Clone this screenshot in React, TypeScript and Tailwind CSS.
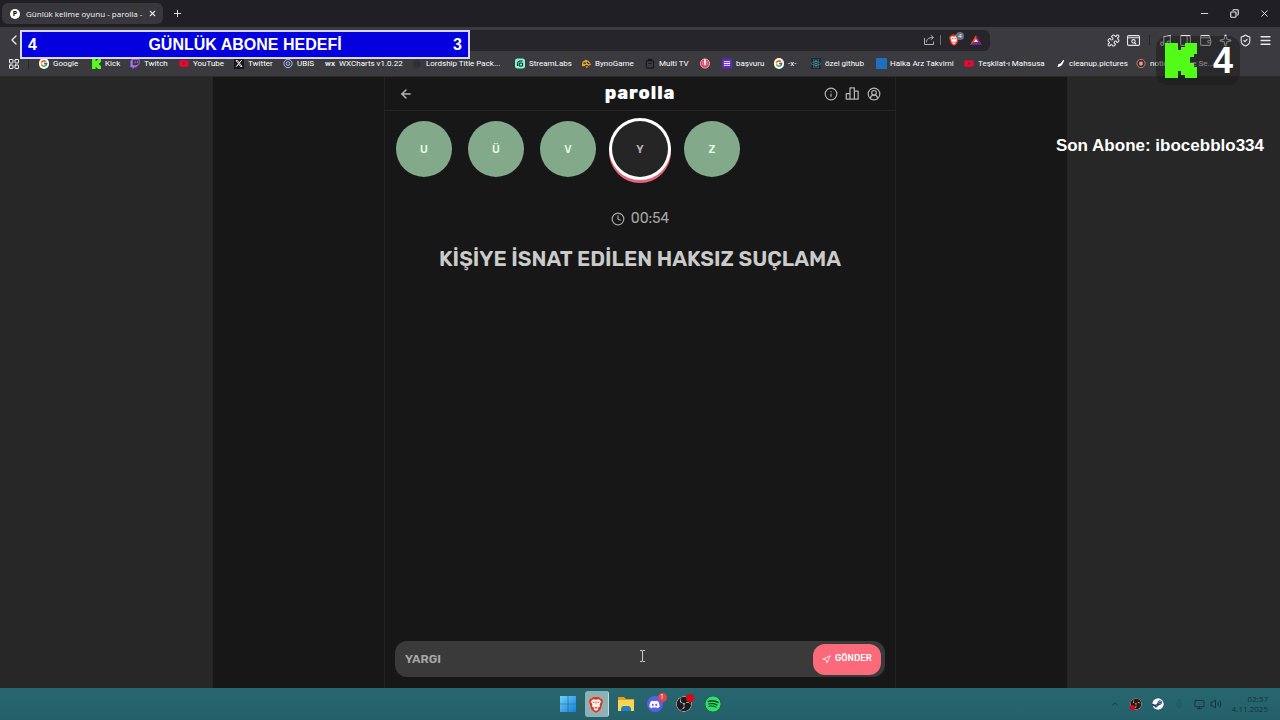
import type { ReactNode } from "react";
import {
    ArrowLeft,
    ChevronLeft,
    ChevronUp,
    CircleUserRound,
    Clock,
    Copy,
    Info,
    LayoutGrid,
    Menu,
    Mic,
    Minus,
    Monitor,
    Music,
    Navigation,
    PanelRight,
    Plus,
    Puzzle,
    ShieldCheck,
    Sparkle,
    Volume2,
    Wallet,
    X,
} from "lucide-react";
import { FaDiscord, FaReact, FaSpotify, FaSteam, FaTwitch, FaYoutube } from "react-icons/fa";
import { FaXTwitter } from "react-icons/fa6";
import { FcGoogle } from "react-icons/fc";
import { SiObsstudio } from "react-icons/si";

function KickLogo({ className }: { className?: string }) {
    return (
        <svg viewBox="0 0 32 35" className={className} fill="#53fc18" aria-hidden="true">
            <path d="M0 0h13v7h3V4h4V0h12v11h-3v3h-4v6h4v4h3v11H20v-3h-4v-4h-3v7H0z" />
        </svg>
    );
}

function BraveLogo({ className }: { className?: string }) {
    return (
        <svg viewBox="0 0 24 28" className={className} aria-hidden="true">
            <path d="M7 1h10l3 3h2l2 5-1 3-3 10-4 4-4 2-4-2-4-4L1 12 0 9l2-5h2z" fill="#e5331b" />
            <path d="M7 5l5 1 5-1 4 4-3 5 1 3-4 3 1 2-4 3-4-3 1-2-4-3 1-3-3-5z" fill="#fff" />
            <path d="M6 9l4 1-2 2zM18 9l-4 1 2 2zM11 9h2l-1 7zM8 17l4 2 4-2-4 5z" fill="#e5331b" />
        </svg>
    );
}

function TriangleLogo() {
    return (
        <svg viewBox="0 0 12 10" className="h-[10px] w-3" aria-hidden="true">
            <path d="M6 0L0 10l6-3z" fill="#ff4724" />
            <path d="M6 0l6 10-6-3z" fill="#9e1f63" />
            <path d="M0 10h12L6 6z" fill="#662d91" />
            <path d="M6 4L4 7h4z" fill="#fff" />
        </svg>
    );
}

function ShareIcon() {
    return (
        <svg
            viewBox="0 0 12 12"
            className="size-3"
            fill="none"
            stroke="#b4b4b8"
            strokeLinecap="round"
            strokeLinejoin="round"
            aria-hidden="true"
        >
            <path d="M1.5 4.5v6h9V8" />
            <path d="M3.5 8c0-3 2-4.5 6.5-4.5M8 1.5l2.5 2L8 5.5" />
        </svg>
    );
}

function PodiumIcon() {
    return (
        <svg
            viewBox="0 0 24 24"
            className="size-[15px]"
            fill="none"
            stroke="currentColor"
            strokeWidth="2"
            strokeLinejoin="round"
            aria-hidden="true"
        >
            <path d="M2 21V12h6v9zM8 21V3h7v18zM15 21V8h6v13z" />
        </svg>
    );
}

function WindowsLogo() {
    return (
        <svg viewBox="0 0 16 16" className="size-4" aria-hidden="true">
            <defs>
                <linearGradient id="win" x1="0" y1="0" x2="1" y2="1">
                    <stop offset="0" stopColor="#6fd0fa" />
                    <stop offset="1" stopColor="#1580d8" />
                </linearGradient>
            </defs>
            <path d="M0 0h7.7v7.7H0zM8.3 0H16v7.7H8.3zM0 8.3h7.7V16H0zM8.3 8.3H16V16H8.3z" fill="url(#win)" />
        </svg>
    );
}

function FolderLogo() {
    return (
        <svg viewBox="0 0 18 16" className="h-4 w-[18px]" aria-hidden="true">
            <path d="M1 1h6l2 2h8v5H1z" fill="#e0a21c" />
            <path d="M1 4h16v11H1z" fill="#fcd450" />
            <path d="M4 15v-3l2-2h6l2 2v3z" fill="#2380c4" />
        </svg>
    );
}

type Bookmark = { label: string; width: string; icon: ReactNode };

const bookmarks: Bookmark[] = [
    {
        label: "Google",
        width: "w-[52px]",
        icon: <FcGoogle className="size-[11px] rounded-full bg-white p-px" />,
    },
    { label: "Kick", width: "w-[39px]", icon: <KickLogo className="h-[10px] w-[9px]" /> },
    { label: "Twitch", width: "w-[49px]", icon: <FaTwitch className="size-[10px] text-[#a970ff]" /> },
    { label: "YouTube", width: "w-[55px]", icon: <FaYoutube className="size-[11px] text-[#f00433]" /> },
    {
        label: "Twitter",
        width: "w-[49px]",
        icon: <FaXTwitter className="size-[11px] bg-[#18181a] p-px text-white" />,
    },
    {
        label: "UBIS",
        width: "w-[42px]",
        icon: (
            <svg viewBox="0 0 12 12" className="size-[11px]" fill="#39405f" stroke="#c8cce0" aria-hidden="true">
                <circle cx="6" cy="6" r="5" />
                <circle cx="6" cy="6" r="2.2" />
            </svg>
        ),
    },
    {
        label: "WXCharts v1.0.22",
        width: "w-[87px]",
        icon: <span className="text-[8px] font-bold text-gray-200">wx</span>,
    },
    {
        label: "Lordship Title Pack...",
        width: "w-[103px]",
        icon: <span className="size-2 rounded-full bg-[#303034]" />,
    },
    {
        label: "StreamLabs",
        width: "w-[66px]",
        icon: (
            <svg viewBox="0 0 12 12" className="size-[11px]" aria-hidden="true">
                <rect width="12" height="12" rx="3" fill="#80f5d2" />
                <path d="M3 9V6q0-3 3-3h3M5 5.5h4V9H5z" fill="none" stroke="#09161d" strokeWidth="1.2" />
            </svg>
        ),
    },
    {
        label: "BynoGame",
        width: "w-[64px]",
        icon: (
            <svg viewBox="0 0 12 12" className="size-[10px]" aria-hidden="true">
                <path d="M1 7l1-4 4-2 4 2 2 4-3 1-2 3-2-3-3 1z" fill="#e9a527" />
                <path d="M3 5h3M7 4l3 2M5 8h3" stroke="#33291c" strokeWidth="1.4" />
            </svg>
        ),
    },
    {
        label: "Multi TV",
        width: "w-[55px]",
        icon: (
            <svg
                viewBox="0 0 12 12"
                className="size-[11px]"
                fill="none"
                stroke="#18181b"
                strokeWidth="1.4"
                aria-hidden="true"
            >
                <rect x="1.5" y="2.5" width="9" height="9" rx="2" />
                <path d="M4 2V1h4v1M4 6h4" />
            </svg>
        ),
    },
    {
        label: "",
        width: "w-[22px]",
        icon: (
            <svg viewBox="0 0 12 12" className="size-[11px]" aria-hidden="true">
                <circle cx="6" cy="6" r="5.5" fill="#e3415d" stroke="#f3c3cb" />
                <path d="M5 1h2v7H5z" fill="#fff" />
                <path d="M3.500 3v5M8.500 3v5" stroke="#f3c3cb" strokeWidth="0.6" />
            </svg>
        ),
    },
    {
        label: "başvuru",
        width: "w-[52px]",
        icon: (
            <svg viewBox="0 0 11 11" className="size-[11px]" aria-hidden="true">
                <rect width="11" height="11" fill="#5b2bbc" />
                <path d="M2 3.5h7M2 5.5h7M2 7.5h7" stroke="#fff" />
            </svg>
        ),
    },
    {
        label: "-x-",
        width: "w-[37px]",
        icon: <FcGoogle className="size-[11px] rounded-full bg-white p-px" />,
    },
    {
        label: "özel github",
        width: "w-[65px]",
        icon: <FaReact className="size-[11px] bg-[#1b2c30] text-[#4d9a9e]" />,
    },
    { label: "Halka Arz Takvimi", width: "w-[88px]", icon: <span className="size-[11px] shrink-0 bg-[#1f6fc0]" /> },
    {
        label: "Teşkilat-ı Mahsusa",
        width: "w-[91px]",
        icon: <FaYoutube className="size-[11px] text-[#f00433]" />,
    },
    {
        label: "cleanup.pictures",
        width: "w-[81px]",
        icon: (
            <svg viewBox="0 0 12 12" className="size-[9px]" aria-hidden="true">
                <path d="M2 11l1-4 3-1 4-5 1 1-3 6-3 2z" fill="#fff" />
            </svg>
        ),
    },
    {
        label: "notion Active Se...",
        width: "w-[90px]",
        icon: (
            <svg viewBox="0 0 12 12" className="size-[11px]" aria-hidden="true">
                <circle cx="6" cy="6" r="5" fill="#402c2c" stroke="#d48c80" />
                <path d="M4 4h4v3L6 9 4 7z" fill="#f2a093" />
            </svg>
        ),
    },
];

function TabStrip() {
    return (
        <div className="flex h-[27px] items-center bg-[#1f1f25] pl-[2px] text-gray-200">
            <div className="flex h-[21px] w-[161px] items-center rounded-md bg-[#38383c] pl-2 pr-[6px]">
                <span className="flex size-[10px] items-center justify-center rounded-full bg-white text-[7px] font-bold leading-none text-black">
                    P
                </span>
                <span className="ml-[6px] flex-1 truncate text-[8px] text-gray-100">
                    Günlük kelime oyunu - parolla -
                </span>
                <button type="button" aria-label="Close tab">
                    <X className="size-[9px]" strokeWidth={3} />
                </button>
            </div>
            <button type="button" aria-label="New tab" className="ml-[9px]">
                <Plus className="size-[11px]" />
            </button>
            <div className="ml-auto flex items-center gap-5 pr-[10px]">
                <button type="button" aria-label="Minimize">
                    <Minus className="size-[11px]" />
                </button>
                <button type="button" aria-label="Restore">
                    <Copy className="size-[9px] -scale-x-100" strokeWidth={3} />
                </button>
                <button type="button" aria-label="Close window">
                    <X className="size-[11px]" />
                </button>
            </div>
        </div>
    );
}

function Toolbar() {
    return (
        <div className="flex h-[26px] items-center bg-[#3b3b3f] pr-2 text-gray-200">
            <button type="button" aria-label="Back" className="pl-[6px]">
                <ChevronLeft className="size-4" />
            </button>
            <div className="ml-[8px] flex h-[21px] flex-1 items-center justify-end gap-[5px] rounded-md bg-[#26262a] pr-2">
                <ShareIcon />
                <span className="h-[10px] w-px bg-gray-500" />
                <span className="relative ml-[3px] mr-[6px]">
                    <BraveLogo className="h-3 w-[10px]" />
                    <span className="absolute -right-[5px] -top-[2px] flex size-2 items-center justify-center rounded-full bg-[#6b6f82] text-[6px] text-white">
                        4
                    </span>
                </span>
                <TriangleLogo />
            </div>
            <div className="ml-[117px] flex items-center gap-[7px]">
                <Puzzle className="size-[13px]" />
                <svg viewBox="0 0 12 12" className="size-[13px]" fill="none" stroke="currentColor" aria-hidden="true">
                    <rect x="0.5" y="1.5" width="11" height="9" rx="1" />
                    <path d="M1 3.5h10M7 8l1.5 1.5" />
                    <circle cx="6" cy="6.8" r="1.6" />
                </svg>
                <span className="mx-[2px] h-[10px] w-px bg-[#25252a]" />
                <Music className="size-[13px]" />
                <PanelRight className="size-[13px]" />
                <Wallet className="size-[13px]" />
                <Sparkle className="size-[13px]" />
                <ShieldCheck className="size-[13px]" />
                <Menu className="size-[13px]" strokeWidth={3} />
            </div>
        </div>
    );
}

function BookmarkBar() {
    return (
        <nav className="flex h-6 items-center overflow-hidden border-b border-[#2b2b2e] bg-[#3b3b3f] pb-[2px] pl-2 font-[Roboto,sans-serif] text-[8px] text-white">
            <LayoutGrid className="mr-2 size-3 shrink-0" />
            <span className="mr-[10px] h-[10px] w-px shrink-0 bg-[#2a2a2e]" />
            {bookmarks.map((item, index) => (
                <a
                    key={index}
                    href="#"
                    aria-label={item.label || "Bookmark"}
                    className={`flex shrink-0 items-center gap-1 whitespace-nowrap ${item.width}`}
                >
                    <span className="flex w-[10px] shrink-0 items-center justify-center">{item.icon}</span>
                    {item.label}
                </a>
            ))}
        </nav>
    );
}

const letters = [
    { letter: "U", active: false },
    { letter: "Ü", active: false },
    { letter: "V", active: false },
    { letter: "Y", active: true },
    { letter: "Z", active: false },
];

function Game() {
    return (
        <main className="flex w-full max-w-[512px] flex-col border-x border-[#222222] font-[Rubik,Inter,sans-serif]">
            <header className="grid h-[34px] grid-cols-3 items-center border-b border-[#262626] px-[14px] text-[#b4b4b4]">
                <button type="button" aria-label="Back" className="justify-self-start">
                    <ArrowLeft className="size-[14px]" strokeWidth={2.5} />
                </button>
                <h1 className="justify-self-center text-[18px] font-extrabold tracking-wider text-white">parolla</h1>
                <div className="flex items-center gap-[7px] justify-self-end">
                    <button type="button" aria-label="Info">
                        <Info className="size-[14px]" />
                    </button>
                    <button type="button" aria-label="Stats">
                        <PodiumIcon />
                    </button>
                    <button type="button" aria-label="Profile">
                        <CircleUserRound className="size-[14px]" />
                    </button>
                </div>
            </header>
            <ul className="flex gap-4 px-[11px] pt-[10px] text-[11px] leading-none">
                {letters.map(({ letter, active }) => (
                    <li
                        key={letter}
                        className={
                            active
                                ? "flex size-14 items-center justify-center rounded-full bg-[#252525] font-semibold text-[#b8b8b8] shadow-[0_0_0_3px_#ffffff,0_3px_0_3px_#e8637a]"
                                : "flex size-14 items-center justify-center rounded-full bg-[#82aa8a] font-medium text-[#e4fbe6]"
                        }
                    >
                        {letter}
                    </li>
                ))}
            </ul>
            <div className="mt-8 flex items-center justify-center gap-[6px] text-[14px] leading-5 text-[#a8a8a8]">
                <Clock className="size-[14px]" />
                <time>00:54</time>
            </div>
            <h2 className="mt-[15px] text-center text-[21px] font-semibold leading-[30px] text-[#cbcbcb]">
                KİŞİYE İSNAT EDİLEN HAKSIZ SUÇLAMA
            </h2>
            <form
                className="mx-[10px] mb-[11px] mt-auto flex h-9 items-center rounded-xl bg-[#3a3a3a] pl-[10px] pr-1"
                onSubmit={(e) => e.preventDefault()}
            >
                <input
                    type="text"
                    aria-label="Cevap"
                    defaultValue="YARGI"
                    className="min-w-0 flex-1 bg-transparent text-[12px] font-semibold text-[#a8a8a8] outline-none"
                />
                <button
                    type="submit"
                    className="flex h-[31px] w-[68px] items-center justify-center gap-1 rounded-xl bg-[#fb6a7a] text-[9px] font-medium text-white"
                >
                    <Navigation className="size-[9px]" />
                    GÖNDER
                </button>
            </form>
        </main>
    );
}

function Taskbar() {
    return (
        <footer className="grid h-8 grid-cols-[1fr_auto_1fr] items-center bg-linear-to-b from-[#28676f] to-[#24606a]">
            <div />
            <div className="flex items-center gap-[5px]">
                <button type="button" aria-label="Start" className="flex w-6 justify-center">
                    <WindowsLogo />
                </button>
                <button
                    type="button"
                    aria-label="Brave"
                    className="flex h-[26px] w-6 items-center justify-center rounded-[3px] border-r border-[#c6dadd] bg-[#8fb0b5]"
                >
                    <BraveLogo className="h-[17px] w-[14px]" />
                </button>
                <button type="button" aria-label="Files" className="flex w-6 justify-center">
                    <FolderLogo />
                </button>
                <button type="button" aria-label="Discord" className="relative flex w-6 justify-center">
                    <span className="flex size-4 items-center justify-center rounded-full bg-[#5661ea]">
                        <FaDiscord className="size-[11px] text-white" />
                    </span>
                    <span className="absolute -top-[3px] right-0 flex size-[9px] items-center justify-center rounded-full bg-[#e5424d] text-[7px] text-white">
                        1
                    </span>
                </button>
                <button type="button" aria-label="OBS" className="relative flex w-6 justify-center">
                    <SiObsstudio className="size-4 rounded-full bg-[#1c191c] text-[#d5d5d5]" />
                    <span className="absolute -top-[2px] right-[2px] size-2 rounded-full bg-[#dd0611]" />
                </button>
                <button type="button" aria-label="Spotify" className="flex w-6 justify-center">
                    <FaSpotify className="size-4 rounded-full bg-[#123c22] text-[#2ee06b]" />
                </button>
            </div>
            <div className="flex items-center justify-end pr-3 text-[#133238]">
                <ChevronUp className="size-[10px]" />
                <span className="relative ml-[10px]">
                    <SiObsstudio className="size-3 rounded-full bg-[#2b1517] text-[#d8c9c9]" />
                    <span className="absolute bottom-0 left-0 size-[5px] rounded-full bg-[#dd0611]" />
                </span>
                <FaSteam className="ml-[10px] size-3 rounded-full bg-[#173f72] text-white" />
                <Mic className="ml-[10px] size-[10px] text-[#1f5560]" />
                <Monitor className="ml-[10px] size-[11px]" />
                <Volume2 className="ml-[5px] size-3" />
                <div className="ml-[10px] text-right text-[8px] leading-[10px]">
                    <div>02:57</div>
                    <div>4.11.2025</div>
                </div>
            </div>
        </footer>
    );
}

function StreamOverlays() {
    return (
        <div className="pointer-events-none font-['Liberation_Sans',Arial,sans-serif] font-bold text-white">
            <div className="absolute left-5 top-[30px] flex h-[29px] w-[450px] items-center justify-between border-2 border-[#d8d8f4] bg-[#0500de] px-[6px] text-[16px]">
                <span>4</span>
                <span>GÜNLÜK ABONE HEDEFİ</span>
                <span>3</span>
            </div>
            <div className="absolute right-10 top-9 flex h-[49px] w-[84px] items-center justify-between rounded-xl bg-[#1a1a1c]/50 pl-[9px] pr-[7px]">
                <KickLogo className="h-[35px] w-8" />
                <span className="text-[36px] leading-[32px]">4</span>
            </div>
            <div className="absolute right-4 top-[135px] text-[17px] leading-[22px]">Son Abone: ibocebblo334</div>
            <svg
                viewBox="0 0 7 12"
                className="absolute left-[639px] top-[650px] h-3 w-[7px]"
                fill="none"
                stroke="#c9c9c9"
                aria-hidden="true"
            >
                <path d="M1 .5h2l.5 1 .5-1h2M3.5 1v10M1 11.5h2l.5-1 .5 1h2" />
            </svg>
        </div>
    );
}

export default function App() {
    return (
        <div className="relative flex h-screen w-full flex-col overflow-hidden bg-[#272727] font-['Open_Sans','Noto_Sans',sans-serif]">
            <TabStrip />
            <Toolbar />
            <BookmarkBar />
            <div className="flex min-h-0 flex-1 justify-center">
                <div className="flex w-2/3 justify-center bg-[#171717]">
                    <Game />
                </div>
            </div>
            <Taskbar />
            <StreamOverlays />
        </div>
    );
}
